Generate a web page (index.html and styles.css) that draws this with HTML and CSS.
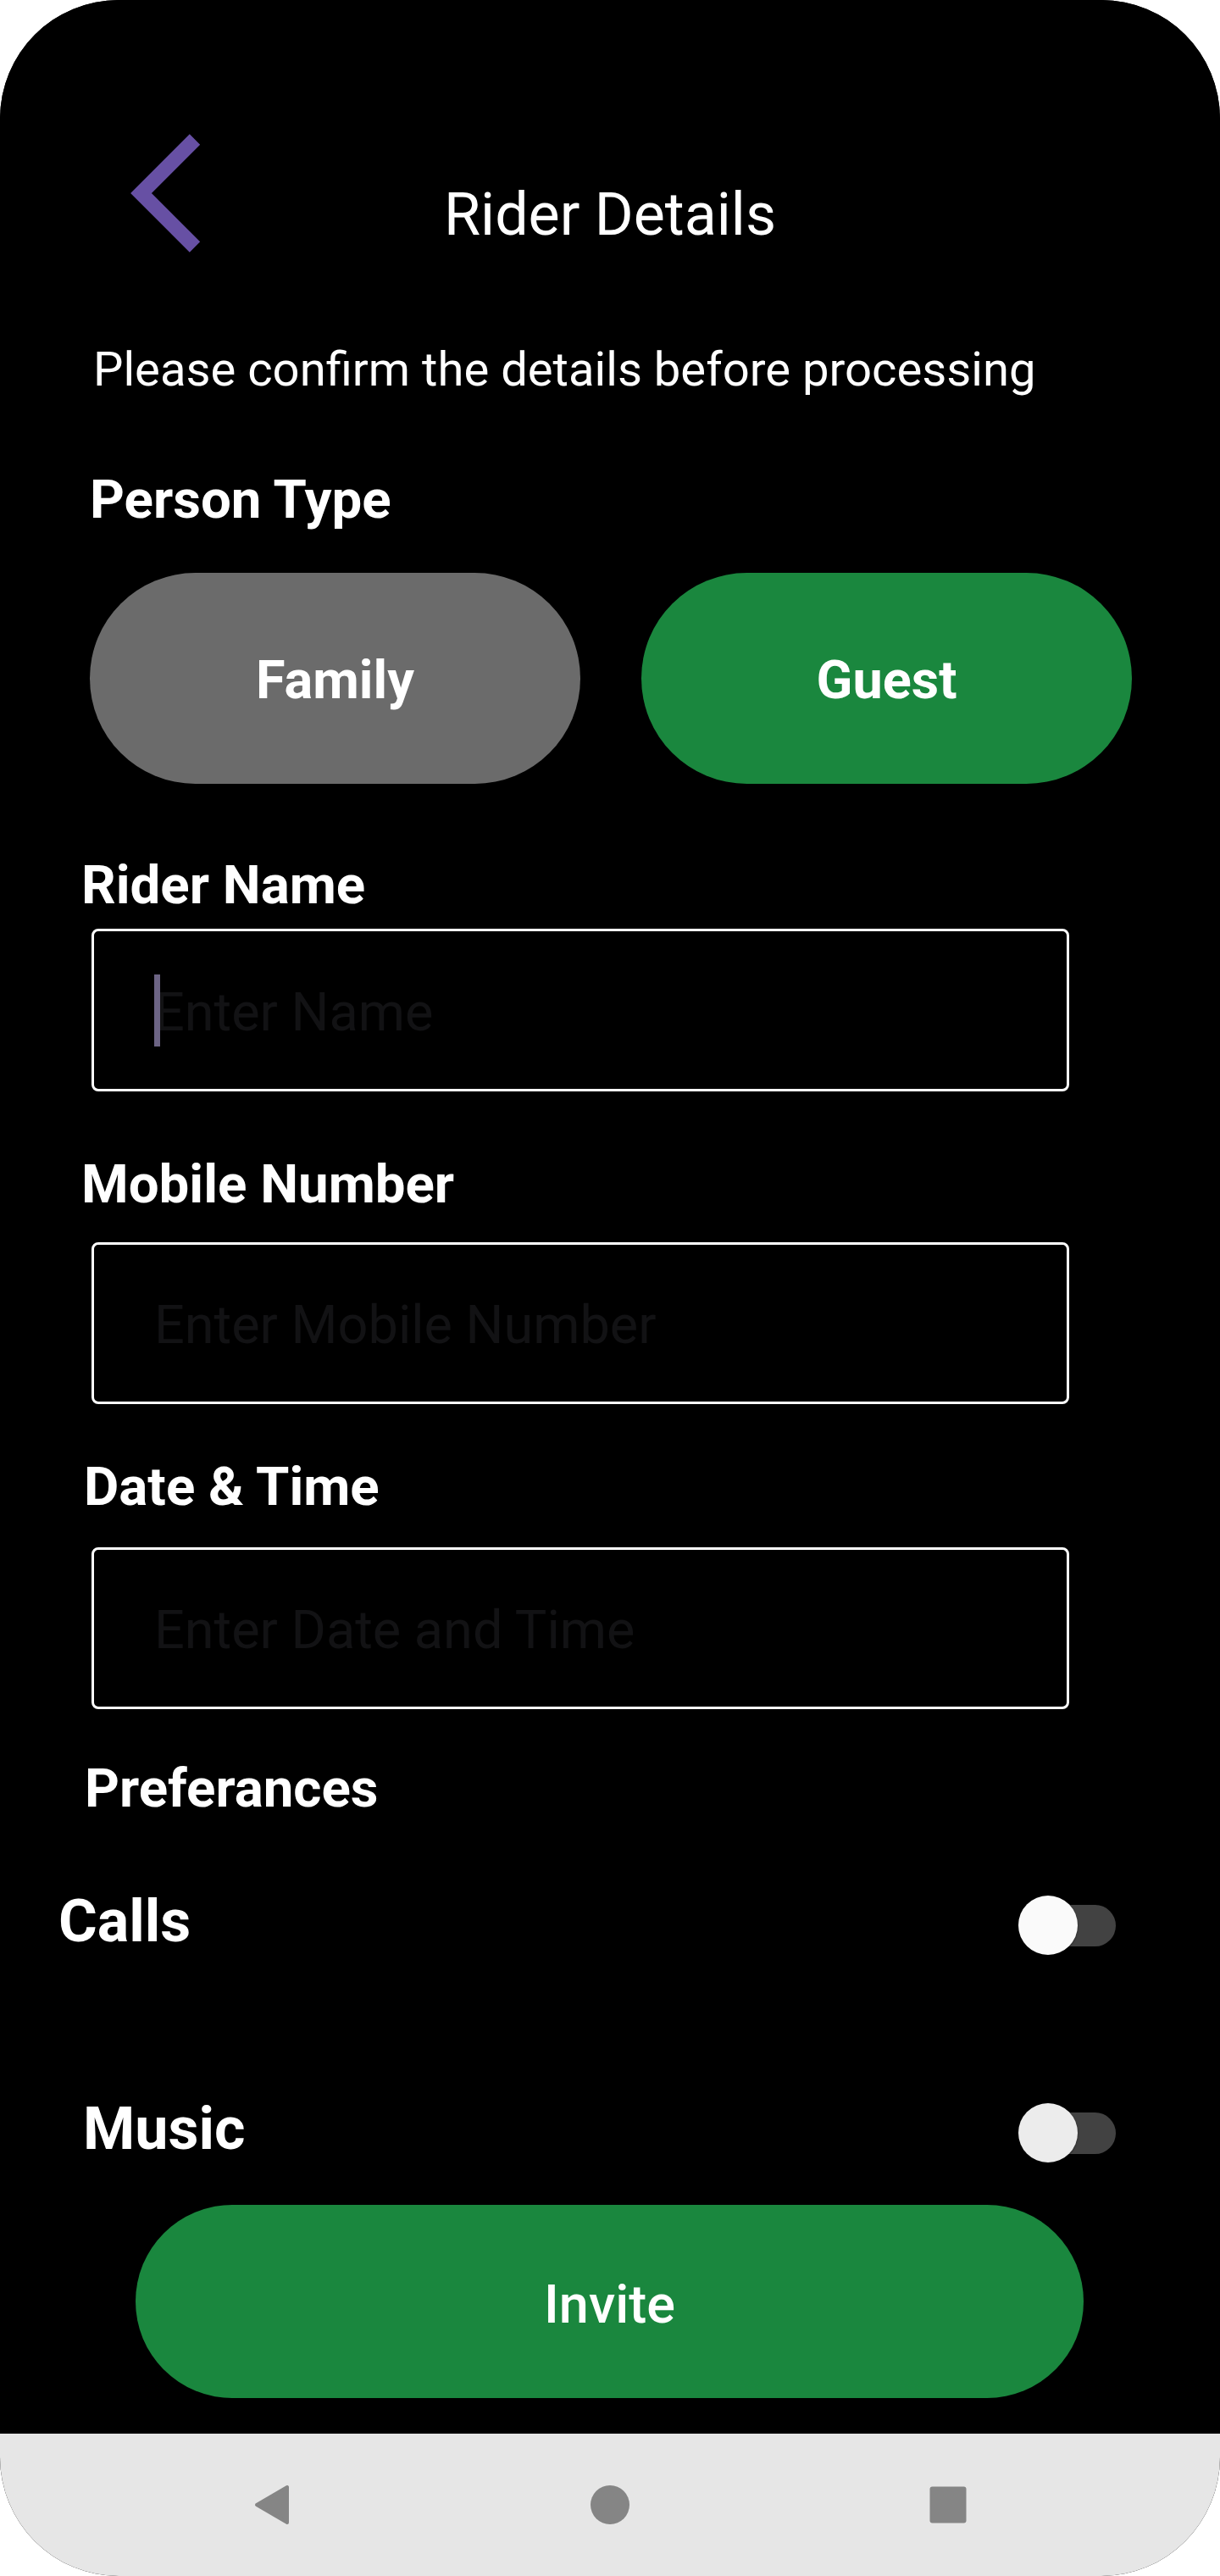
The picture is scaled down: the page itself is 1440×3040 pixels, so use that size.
FILE: index.html
```html
<!DOCTYPE html>
<html lang="en">
<head>
<meta charset="utf-8">
<title>Rider Details</title>
<link rel="stylesheet" href="styles.css">
</head>
<body>
<div class="phone">
  <main class="screen">
    <header class="header">
      <svg class="back" width="110" height="150" viewBox="0 0 110 150" aria-label="Back">
        <polyline points="90,14.5 26.5,78 90,141.5" fill="none" stroke="#6750a4" stroke-width="17.5" stroke-linejoin="miter" stroke-miterlimit="10"/>
      </svg>
      <h1 class="title">Rider Details</h1>
      <span></span>
    </header>

    <p class="subtitle">Please confirm the details before processing</p>

    <h2 class="label label-person">Person Type</h2>
    <div class="type-row">
      <button class="pill pill-family">Family</button>
      <button class="pill pill-guest">Guest</button>
    </div>

    <h2 class="label label-name">Rider Name</h2>
    <div class="field field-name">
      <span class="cursor"></span>
      <span class="placeholder">Enter Name</span>
    </div>

    <h2 class="label label-mobile">Mobile Number</h2>
    <div class="field field-mobile">
      <span class="placeholder">Enter Mobile Number</span>
    </div>

    <h2 class="label label-date">Date &amp; Time</h2>
    <div class="field field-date">
      <span class="placeholder">Enter Date and Time</span>
    </div>

    <h2 class="label label-pref">Preferances</h2>

    <div class="pref-row pref-calls">
      <span class="pref-name">Calls</span>
      <span class="toggle"><span class="track"></span><span class="thumb thumb-calls"></span></span>
    </div>

    <div class="pref-row pref-music">
      <span class="pref-name">Music</span>
      <span class="toggle"><span class="track"></span><span class="thumb thumb-music"></span></span>
    </div>

    <button class="invite">Invite</button>
  </main>

  <nav class="navbar">
    <svg class="nav-icon" width="60" height="60" viewBox="0 0 60 60" aria-label="Back">
      <polygon points="48,9 48,51 12,30" fill="#858585" stroke="#858585" stroke-width="4" stroke-linejoin="round"/>
    </svg>
    <svg class="nav-icon" width="60" height="60" viewBox="0 0 60 60" aria-label="Home">
      <circle cx="30" cy="30" r="23" fill="#858585"/>
    </svg>
    <svg class="nav-icon" width="60" height="60" viewBox="0 0 60 60" aria-label="Recents">
      <rect x="8.5" y="8.5" width="43" height="43" rx="3" fill="#858585"/>
    </svg>
  </nav>
</div>
</body>
</html>
```

FILE: styles.css
```css
* {
  box-sizing: border-box;
}

html, body {
  margin: 0;
  padding: 0;
  background: #ffffff;
}

body {
  font-family: Roboto, "Liberation Sans", Arial, sans-serif;
  color: #ffffff;
}

.phone {
  width: 1440px;
  height: 3040px;
  border-radius: 140px;
  overflow: hidden;
  background: #000000;
  display: flex;
  flex-direction: column;
}

.screen {
  height: 2872px;
  flex: none;
  display: flex;
  flex-direction: column;
  align-items: flex-start;
  background: #000000;
}

/* Header */
.header {
  width: 100%;
  height: 300px;
  padding-top: 150px;
  display: grid;
  grid-template-columns: 1fr auto 1fr;
  align-items: start;
}

.back {
  display: block;
  margin-left: 140px;
}

.title {
  margin: 62px 0 0;
  font-size: 70px;
  line-height: 82px;
  font-weight: 400;
}

.subtitle {
  margin: 103px 0 0 110px;
  font-size: 56.2px;
  line-height: 66px;
  font-weight: 400;
}

/* Labels */
.label {
  margin: 0;
  font-size: 63.6px;
  line-height: 74px;
  font-weight: 700;
}

.label-person {
  margin: 84px 0 0 106px;
}

.label-name {
  margin: 83px 0 0 96px;
}

.label-mobile {
  margin: 73px 0 0 96px;
}

.label-date {
  margin: 61px 0 0 99px;
}

.label-pref {
  margin: 57px 0 0 100px;
}

/* Person type buttons */
.type-row {
  margin: 49px 0 0 106px;
  display: flex;
  gap: 72px;
}

.pill {
  width: 579px;
  height: 249px;
  border: none;
  border-radius: 125px;
  font-family: Roboto, "Liberation Sans", Arial, sans-serif;
  font-size: 63px;
  font-weight: 700;
  color: #ffffff;
  padding: 4px 0 0;
}

.pill-family {
  background: #6b6b6b;
}

.pill-guest {
  background: #1a873e;
}

/* Fields */
.field {
  margin-left: 108px;
  width: 1154px;
  height: 192px;
  border: 3px solid #ffffff;
  border-radius: 8px;
  display: flex;
  align-items: center;
  padding-left: 71px;
  padding-top: 5px;
}

.field-name {
  margin-top: 14px;
}

.field-mobile {
  margin-top: 31px;
  height: 191px;
}

.field-date {
  margin-top: 34px;
  height: 191px;
}

.placeholder {
  font-size: 63px;
  line-height: 74px;
  color: #121214;
}

.cursor {
  width: 7px;
  height: 85px;
  margin-right: -7px;
  margin-top: -5px;
  background: #6c6484;
  flex: none;
  position: relative;
  z-index: 1;
}

/* Preferences */
.pref-row {
  width: 100%;
  display: flex;
  align-items: center;
  justify-content: space-between;
  padding-right: 123px;
}

.pref-calls {
  margin-top: 78px;
  padding-left: 69px;
}

.pref-music {
  margin-top: 163px;
  padding-left: 98px;
}

.pref-name {
  font-size: 70px;
  line-height: 82px;
  font-weight: 700;
}

.toggle {
  position: relative;
  width: 115px;
  height: 70px;
  margin-top: 10px;
  display: flex;
  align-items: center;
}

.track {
  width: 115px;
  height: 49px;
  border-radius: 25px;
  background: #424242;
}

.thumb {
  position: absolute;
  left: 0;
  top: 0;
  width: 70px;
  height: 70px;
  border-radius: 50%;
  box-shadow: 0 1px 2px rgba(0, 0, 0, 0.5);
}

.thumb-calls {
  background: #fafafa;
}

.thumb-music {
  background: #ececec;
}

/* Invite */
.invite {
  margin: 49px 0 0 160px;
  width: 1119px;
  height: 228px;
  border: none;
  border-radius: 114px;
  background: #1a873e;
  color: #ffffff;
  font-family: Roboto, "Liberation Sans", Arial, sans-serif;
  font-size: 63px;
  font-weight: 500;
  padding: 6px 0 0;
}

/* Navigation bar */
.navbar {
  flex: 1;
  background: #e6e6e6;
  display: flex;
  align-items: center;
  justify-content: center;
  gap: 339px;
}

.nav-icon {
  display: block;
}
```
